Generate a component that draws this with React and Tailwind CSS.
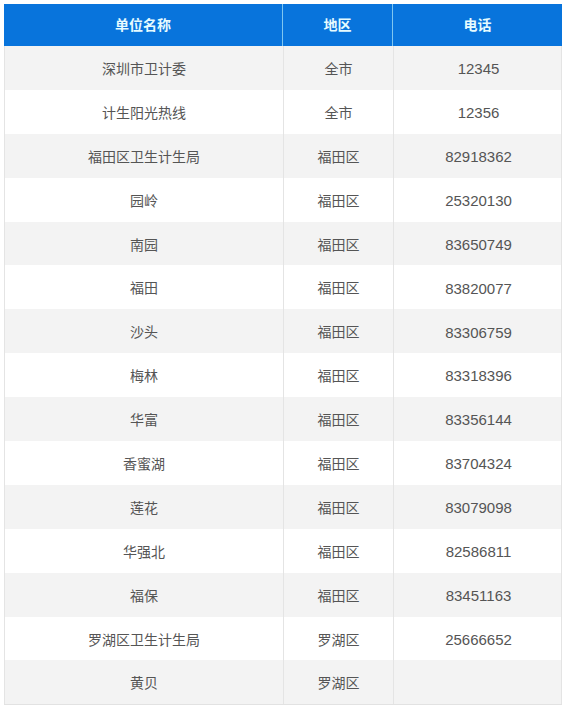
const rows = [
  ['深圳市卫计委', '全市', '12345'],
  ['计生阳光热线', '全市', '12356'],
  ['福田区卫生计生局', '福田区', '82918362'],
  ['园岭', '福田区', '25320130'],
  ['南园', '福田区', '83650749'],
  ['福田', '福田区', '83820077'],
  ['沙头', '福田区', '83306759'],
  ['梅林', '福田区', '83318396'],
  ['华富', '福田区', '83356144'],
  ['香蜜湖', '福田区', '83704324'],
  ['莲花', '福田区', '83079098'],
  ['华强北', '福田区', '82586811'],
  ['福保', '福田区', '83451163'],
  ['罗湖区卫生计生局', '罗湖区', '25666652'],
  ['黄贝', '罗湖区', ''],
];

export default function App() {
  return (
    <div className="w-[564px] h-[712px] bg-white pt-[4px] pl-[4px] font-['Segoe_UI','Liberation_Sans','Noto_Sans_CJK_SC',sans-serif]">
      <div className="w-[558px] border-b border-[#e2e2e2]">
        {/* Header */}
        <div className="grid grid-cols-[279px_110px_169px] h-[42px] bg-[#0874dc] text-[14px] font-bold text-[#e6fbff]">
          <div className="flex items-center justify-center border-r border-[#7fc6f0]">单位名称</div>
          <div className="flex items-center justify-center border-r border-[#7fc6f0]">地区</div>
          <div className="flex items-center justify-center">电话</div>
        </div>

        {/* Body */}
        {rows.map((r, i) => (
          <div
            key={i}
            className={`grid grid-cols-[279px_110px_169px] h-[43.9px] text-[14px] text-[#555] border-l border-r border-[#e4e4e4] ${i % 2 === 0 ? 'bg-[#f3f3f3]' : 'bg-white'}`}
          >
            <div className="flex items-center justify-center pt-[3px] border-r border-[#e4e4e4]">{r[0]}</div>
            <div className="flex items-center justify-center pt-[3px] border-r border-[#e4e4e4]">{r[1]}</div>
            <div className="flex items-center justify-center pt-[3px] text-[15px]">{r[2]}</div>
          </div>
        ))}
      </div>
    </div>
  );
}
